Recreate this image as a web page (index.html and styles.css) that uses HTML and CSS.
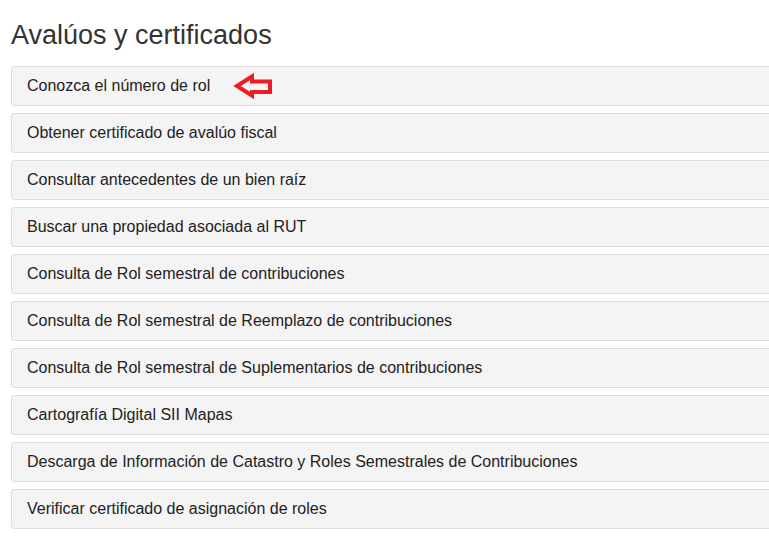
FILE: index.html
```html
<!DOCTYPE html>
<html lang="es">
<head>
  <meta charset="UTF-8" />
  <title>Avalúos y certificados</title>
  <link rel="stylesheet" href="styles.css">
</head>
<body>
  <div class="container">
    <h2>Avalúos y certificados</h2>

    <div class="panel">
      <span>Conozca el número de rol</span>
      <svg class="arrow" width="40" height="28" viewBox="0 0 40 28">
        <path d="M4 14 L19 4.5 L19 9.5 L37 9.5 L37 20 L19 20 L19 23.5 Z" fill="none" stroke="#ed1c24" stroke-width="4" stroke-linejoin="miter"/>
      </svg>
    </div>
    <div class="panel"><span>Obtener certificado de avalúo fiscal</span></div>
    <div class="panel"><span>Consultar antecedentes de un bien raíz</span></div>
    <div class="panel"><span>Buscar una propiedad asociada al RUT</span></div>
    <div class="panel"><span>Consulta de Rol semestral de contribuciones</span></div>
    <div class="panel"><span>Consulta de Rol semestral de Reemplazo de contribuciones</span></div>
    <div class="panel"><span>Consulta de Rol semestral de Suplementarios de contribuciones</span></div>
    <div class="panel"><span>Cartografía Digital SII Mapas</span></div>
    <div class="panel"><span>Descarga de Información de Catastro y Roles Semestrales de Contribuciones</span></div>
    <div class="panel"><span>Verificar certificado de asignación de roles</span></div>
  </div>
</body>
</html>
```

FILE: styles.css
```css
* {
  box-sizing: border-box;
}
body {
  margin: 0;
  background: #fff;
  font-family: 'Liberation Sans', Arial, sans-serif;
  color: #333;
  overflow: hidden;
}
.container {
  padding: 0 0 0 11px;
}
h2 {
  margin: 0;
  padding-top: 19px;
  height: 66px;
  font-size: 27px;
  font-weight: normal;
  line-height: 32px;
  color: #333;
}
.panel {
  display: flex;
  align-items: center;
  height: 40px;
  margin-bottom: 7px;
  margin-right: -20px;
  padding: 0 15px;
  background: #f4f4f4;
  border: 1px solid #dcdcdc;
  border-radius: 3px;
  font-size: 16px;
  color: #222;
}
.arrow {
  margin-left: 23px;
}
```
